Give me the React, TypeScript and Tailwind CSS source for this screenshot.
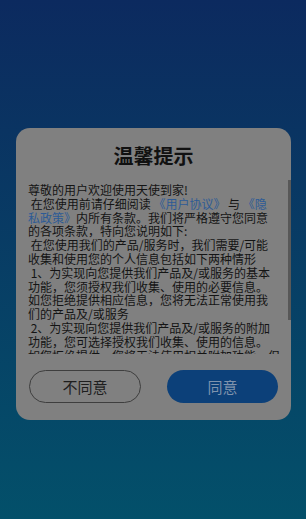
import React from 'react';

const lines: React.ReactNode[] = [
  '尊敬的用户欢迎使用天使到家!',
  <>
    {' 在您使用前请仔细阅读 '}
    <span className="text-[#2d5b96]">《用户协议》</span>
    {' 与 '}
    <span className="text-[#2d5b96]">《隐</span>
  </>,
  <>
    <span className="text-[#2d5b96]">私政策》</span>
    内所有条款。我们将严格遵守您同意
  </>,
  '的各项条款，特向您说明如下:',
  ' 在您使用我们的产品/服务时，我们需要/可能',
  '收集和使用您的个人信息包括如下两种情形',
  ' 1、为实现向您提供我们产品及/或服务的基本',
  '功能，您须授权我们收集、使用的必要信息。',
  '如您拒绝提供相应信息，您将无法正常使用我',
  '们的产品及/或服务',
  ' 2、为实现向您提供我们产品及/或服务的附加',
  '功能，您可选择授权我们收集、使用的信息。',
  '如您拒绝提供，您将无法使用相关附加功能，但',
  '不影响您使用基本功能。',
];

export default function App() {
  return (
    <div className="w-full h-[519px] overflow-hidden bg-gradient-to-b from-[#0c2a5f] to-[#03506a] pt-[128px] pl-[16px] font-['Noto_Sans_CJK_SC','Noto_Sans',sans-serif]">
      <div className="w-[275px] h-[292px] rounded-[14px] bg-[#808080] flex flex-col">
        <div className="pt-[14px] text-center text-[20px] leading-[28px] font-bold text-[#111]">温馨提示</div>

        <div className="relative mt-[10px] h-[174px] overflow-hidden pl-[12px] pt-[3px] text-[12px] leading-[13.8px] text-[#141414]">
          {lines.map((line, i) => (
            <div key={i} className="whitespace-pre">
              {line}
            </div>
          ))}
          <div className="absolute right-0 top-0 w-[3px] h-[140px] bg-[#585858]" />
        </div>

        <div className="mt-[16px] flex gap-[26px] px-[13px]">
          <button className="h-[33px] w-[112px] rounded-full border border-[#3e3e3e] bg-[#808080] text-[15px] leading-[20px] text-[#1e1e1e]">
            不同意
          </button>
          <button className="h-[33px] w-[111px] rounded-full bg-[#0c4079] text-[15px] leading-[20px] text-[#7f93ad]">
            同意
          </button>
        </div>
      </div>
    </div>
  );
}
